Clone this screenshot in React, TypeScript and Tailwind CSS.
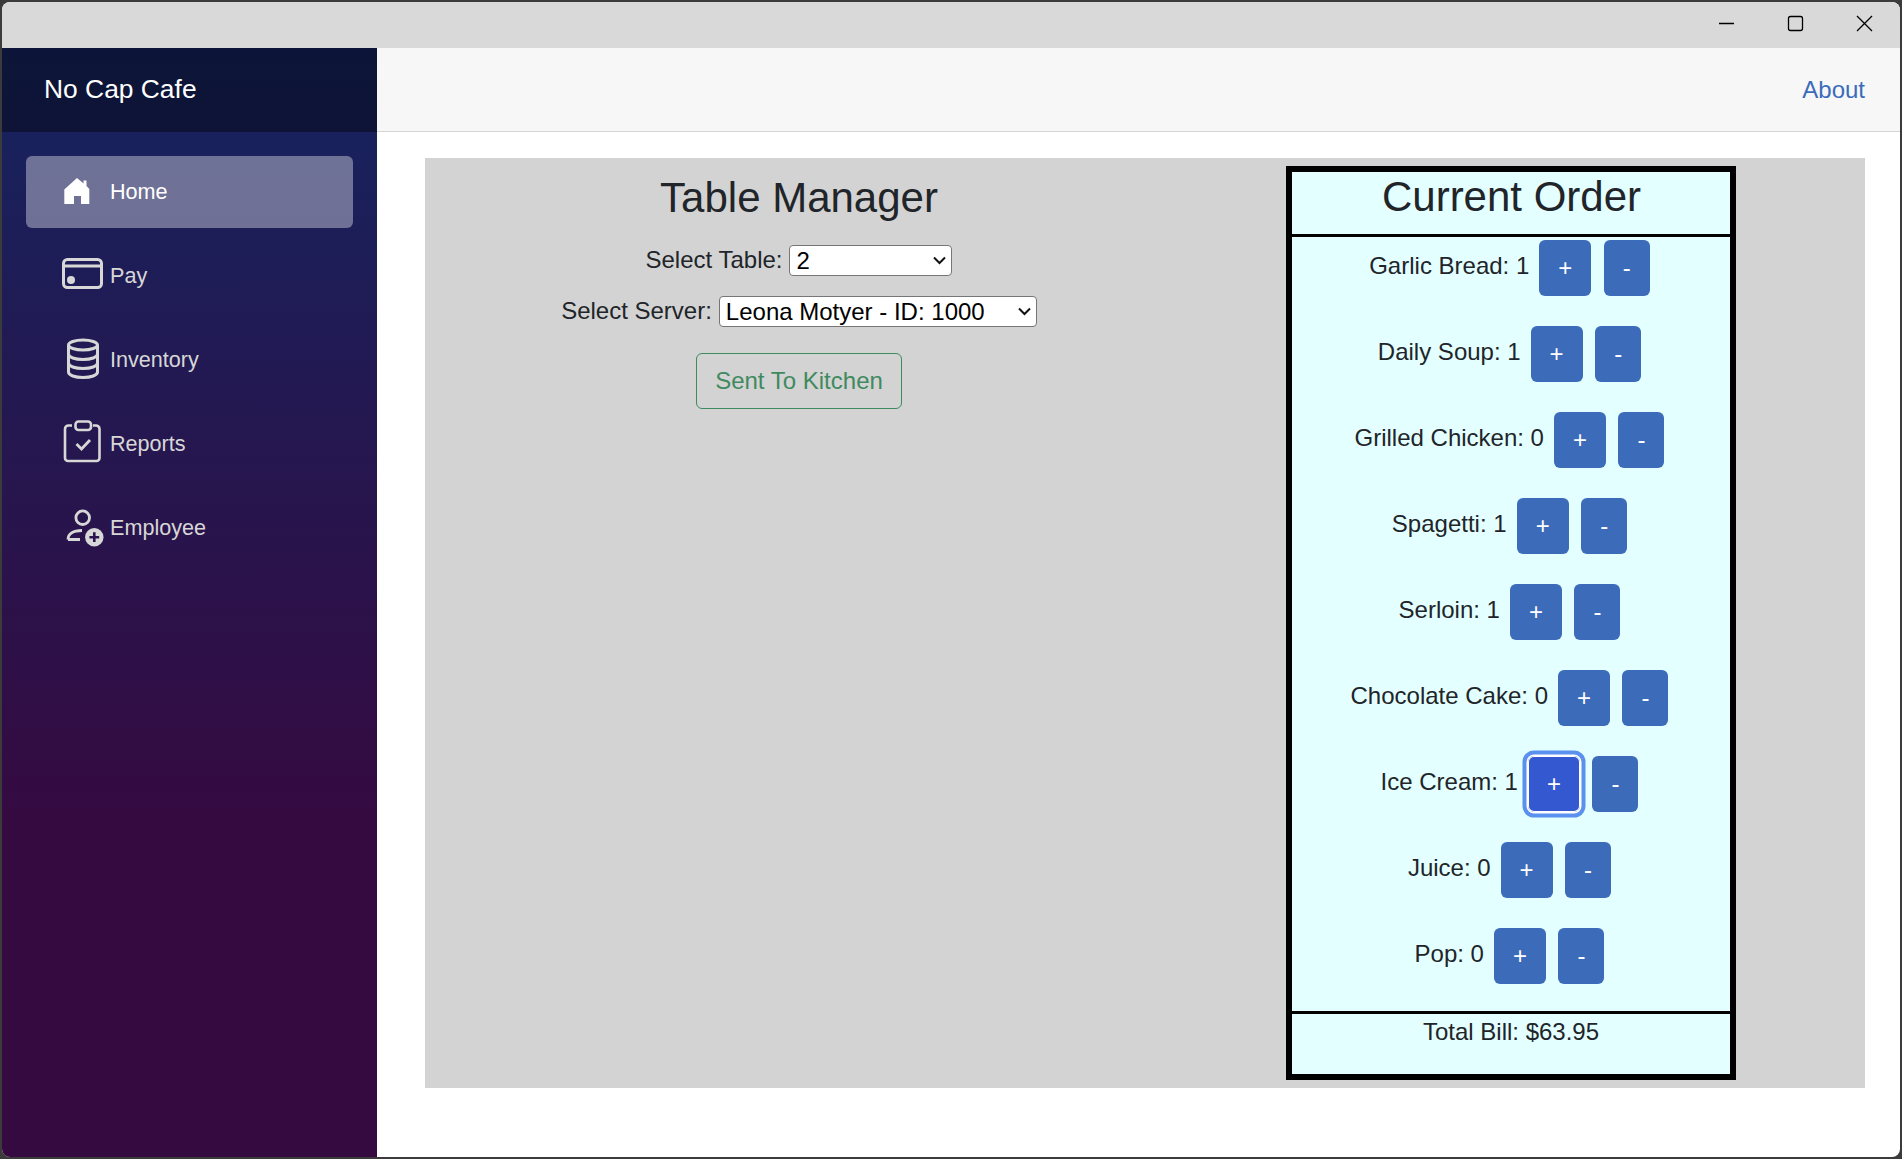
const items = [
  { name: "Garlic Bread", qty: 1 },
  { name: "Daily Soup", qty: 1 },
  { name: "Grilled Chicken", qty: 0 },
  { name: "Spagetti", qty: 1 },
  { name: "Serloin", qty: 1 },
  { name: "Chocolate Cake", qty: 0 },
  { name: "Ice Cream", qty: 1, focused: true },
  { name: "Juice", qty: 0 },
  { name: "Pop", qty: 0 },
];

function HomeIcon() {
  return (
    <svg width="50" height="50" viewBox="0 0 50 50" aria-hidden="true">
      <path
        d="M17 11 L23.5 16.5 V13.5 H26.5 V19 L29.3 22 V37 H21 V29 H14 V37 H4.3 V22.5 Z"
        fill="#ffffff"
      />
    </svg>
  );
}

function CardIcon() {
  return (
    <svg width="50" height="50" viewBox="0 0 50 50" fill="none" stroke="#d7d7d7" strokeWidth="3" aria-hidden="true">
      <rect x="3.5" y="8.5" width="38" height="28" rx="4" />
      <path d="M3.5 15 H41.5" />
      <circle cx="11" cy="29" r="4" fill="#d7d7d7" stroke="none" />
    </svg>
  );
}

function DatabaseIcon() {
  return (
    <svg width="50" height="50" viewBox="0 0 50 50" fill="none" stroke="#d7d7d7" strokeWidth="3" aria-hidden="true">
      <ellipse cx="23" cy="10" rx="14.5" ry="5" />
      <path d="M8.5 10 V37 C8.5 40.3 15 42.5 23 42.5 S37.5 40.3 37.5 37 V10" />
      <path d="M8.5 19 C8.5 22.3 15 24.5 23 24.5 S37.5 22.3 37.5 19" />
      <path d="M8.5 28 C8.5 31.3 15 33.5 23 33.5 S37.5 31.3 37.5 28" />
    </svg>
  );
}

function ClipboardIcon() {
  return (
    <svg width="50" height="50" viewBox="0 0 50 50" fill="none" stroke="#d7d7d7" strokeWidth="2.6" aria-hidden="true">
      <path d="M12 6.5 H8.5 A3.5 3.5 0 0 0 5 10 V39 A3 3 0 0 0 8 42 H36.5 A3 3 0 0 0 39.5 39 V10 A3.5 3.5 0 0 0 36 6.5 H33" />
      <rect x="15.5" y="2.5" width="15.5" height="8.5" rx="3" />
      <path d="M16.5 25 L21.5 30 L30 21" strokeWidth="2.8" />
    </svg>
  );
}

function PersonAddIcon() {
  return (
    <svg width="50" height="50" viewBox="0 0 50 50" fill="none" stroke="#d7d7d7" strokeWidth="2.8" aria-hidden="true">
      <circle cx="22.7" cy="14.7" r="6.8" />
      <path d="M8 36.5 C8 31 13 27.5 22 27.5 M8 36.5 H20" />
      <circle cx="34.3" cy="34.2" r="9.2" fill="#d7d7d7" stroke="none" />
      <path d="M34.3 29.3 V39.1 M29.4 34.2 H39.2" stroke="#2a1550" strokeWidth="2.6" />
    </svg>
  );
}

function Chevron() {
  return (
    <svg
      className="pointer-events-none absolute right-[6px] top-[11px]"
      width="13"
      height="9"
      viewBox="0 0 13 9"
      fill="none"
      stroke="#111111"
      strokeWidth="2"
      aria-hidden="true"
    >
      <path d="M1 1.5 L6.5 7 L12 1.5" />
    </svg>
  );
}

const nav = [
  { label: "Home", icon: <HomeIcon />, active: true },
  { label: "Pay", icon: <CardIcon /> },
  { label: "Inventory", icon: <DatabaseIcon /> },
  { label: "Reports", icon: <ClipboardIcon /> },
  { label: "Employee", icon: <PersonAddIcon /> },
];

function Sidebar() {
  return (
    <aside className="flex w-[375px] shrink-0 flex-col bg-[linear-gradient(180deg,#15245f_0%,#350a41_70%)]">
      <div className="flex h-[84px] items-center bg-black/40 pl-[42px] text-[26.4px] text-white">
        No Cap Cafe
      </div>
      <nav className="flex flex-col gap-[12px] pl-[24px] pt-[24px]">
        {nav.map((n) => (
          <a
            key={n.label}
            className={`flex h-[72px] w-[327px] items-center rounded-[6px] pl-[34px] text-[21.6px] ${
              n.active ? "bg-white/[0.37] text-white" : "text-[#d7d7d7]"
            }`}
          >
            <span className="w-[50px] shrink-0">{n.icon}</span>
            {n.label}
          </a>
        ))}
      </nav>
    </aside>
  );
}

function OrderRow({ name, qty, focused }: { name: string; qty: number; focused?: boolean }) {
  return (
    <div className="flex h-[56px] items-center justify-center pr-[3px]">
      <span className="mb-[5px] mr-[10px] leading-[36px]">
        {name}: {qty}
      </span>
      <button
        className={`h-[56px] w-[52px] rounded-[6px] text-[24px] text-white ${
          focused
            ? "bg-[#3458cf] shadow-[inset_0_0_0_1px_#ffffff,0_0_0_1.5px_#ffffff,0_0_0_5.5px_#5a90ee]"
            : "bg-[#3c6bb9]"
        }`}
      >
        +
      </button>
      <button className="ml-[12.5px] h-[56px] w-[46px] rounded-[6px] bg-[#3c6bb9] text-[24px] text-white">-</button>
    </div>
  );
}

function CurrentOrder() {
  return (
    <div className="ml-[113px] mt-[8px] flex h-[914px] w-[450px] flex-col border-[6px] border-black bg-[#e4ffff]">
      <h3 className="h-[65px] border-b-[3px] border-black pl-[1px] text-center text-[42px] leading-[50px]">Current Order</h3>
      <div className="flex flex-1 flex-col gap-[30px] pt-[3px]">
        {items.map((i) => (
          <OrderRow key={i.name} name={i.name} qty={i.qty} focused={i.focused} />
        ))}
      </div>
      <div className="h-[63px] border-t-[3px] border-black text-center leading-[36px]">Total Bill: $63.95</div>
    </div>
  );
}

function TableManager() {
  return (
    <div className="flex w-[748px] flex-col items-center pt-[15px]">
      <h3 className="text-[42px] leading-[50.4px]">Table Manager</h3>
      <div className="mt-[19px] flex h-[36px] items-center gap-[7px]">
        <label>Select Table:</label>
        <span className="relative">
          <select
            defaultValue="2"
            className="block h-[31px] w-[163px] appearance-none rounded-[4px] border border-[#767676] bg-white pl-[6px] text-[24px] leading-[27px] text-black"
          >
            <option>1</option>
            <option>2</option>
            <option>3</option>
          </select>
          <Chevron />
        </span>
      </div>
      <div className="mt-[15px] flex h-[36px] items-center gap-[7px]">
        <label>Select Server:</label>
        <span className="relative">
          <select className="block h-[31px] w-[318px] appearance-none rounded-[4px] border border-[#767676] bg-white pl-[6px] text-[24px] leading-[27px] text-black">
            <option>Leona Motyer - ID: 1000</option>
          </select>
          <Chevron />
        </span>
      </div>
      <button className="mt-[24px] h-[56px] rounded-[6px] border border-[#3f8a60] px-[18px] text-[24px] text-[#3f8a60]">
        Sent To Kitchen
      </button>
    </div>
  );
}

export default function App() {
  return (
    <div className="h-screen w-full bg-[#3b3b3b] p-[2px] font-['Liberation_Sans',Arial,sans-serif] text-[24px] text-[#212529]">
      <div className="flex h-full flex-col overflow-hidden rounded-[8px] bg-white">
        <div className="flex h-[46px] shrink-0 items-center justify-end bg-[#d9d9d9]">
          <svg width="200" height="46" viewBox="0 0 200 46" fill="none" stroke="#000000" strokeWidth="1.3" aria-hidden="true">
            <path d="M19 21.5 H34" />
            <rect x="88.5" y="14.5" width="14" height="14" rx="2" />
            <path d="M157 14 L172 29 M172 14 L157 29" />
          </svg>
        </div>
        <div className="flex min-h-0 flex-1">
          <Sidebar />
          <div className="flex min-w-0 flex-1 flex-col">
            <header className="flex h-[84px] shrink-0 items-center justify-end border-b border-[#d6d5d5] bg-[#f7f7f7] pr-[35px]">
              <a className="text-[#3c6bb9]">About</a>
            </header>
            <main className="pl-[48px] pr-[35px] pt-[26px]">
              <div className="flex h-[930px] bg-[#d3d3d3]">
                <TableManager />
                <CurrentOrder />
              </div>
            </main>
          </div>
        </div>
      </div>
    </div>
  );
}
